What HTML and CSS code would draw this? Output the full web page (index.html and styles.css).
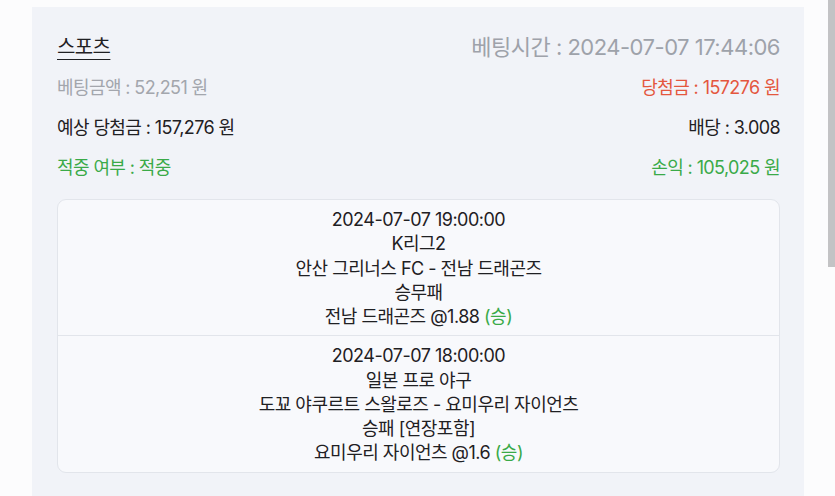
FILE: index.html
```html
<!DOCTYPE html>
<html lang="ko">
<head>
<meta charset="utf-8">
<link rel="stylesheet" href="styles.css">
</head>
<body>
<div class="page">
  <div class="card">
    <div class="header">
      <span class="title">스포츠</span>
      <span class="time">베팅시간 : 2024-07-07 17:44:06</span>
    </div>
    <div class="rows">
      <div class="row">
        <span class="muted">베팅금액 : 52,251 원</span>
        <span class="red">당첨금 : 157276 원</span>
      </div>
      <div class="row">
        <span class="dark">예상 당첨금 : 157,276 원</span>
        <span class="dark">배당 : 3.008</span>
      </div>
      <div class="row">
        <span class="green">적중 여부 : 적중</span>
        <span class="green">손익 : 105,025 원</span>
      </div>
    </div>
    <div class="games">
      <div class="game">
        <div>2024-07-07 19:00:00</div>
        <div>K리그2</div>
        <div>안산 그리너스 FC - 전남 드래곤즈</div>
        <div>승무패</div>
        <div>전남 드래곤즈 @1.88 <span class="green">(승)</span></div>
      </div>
      <div class="game">
        <div>2024-07-07 18:00:00</div>
        <div>일본 프로 야구</div>
        <div>도꾜 야쿠르트 스왈로즈 - 요미우리 자이언츠</div>
        <div>승패 [연장포함]</div>
        <div>요미우리 자이언츠 @1.6 <span class="green">(승)</span></div>
      </div>
    </div>
  </div>
  <div class="scrollbar"><div class="thumb"></div></div>
</div>
</body>
</html>
```

FILE: styles.css
```css
html, body {
  margin: 0;
  padding: 0;
}
body {
  background: #fcfcfd;
  font-family: Inter, "Noto Sans CJK KR", sans-serif;
  color: #1f2023;
  overflow: hidden;
}
.page {
  position: relative;
  height: 496px;
  overflow: hidden;
  padding-top: 7px;
  box-sizing: border-box;
}
.card {
  margin: 0 0 0 32px;
  width: 772px;
  box-sizing: border-box;
  background: #f1f3f8;
  padding: 24px 24px 40px 25px;
  min-height: 520px;
}
.header {
  display: flex;
  justify-content: space-between;
  align-items: center;
  height: 28px;
}
.title {
  font-size: 20px;
  letter-spacing: -0.6px;
  text-decoration: underline;
  text-underline-offset: 5px;
  text-decoration-thickness: 1px;
  color: #1f2023;
}
.time {
  font-size: 22px;
  letter-spacing: -0.5px;
  color: #9ea2aa;
}
.rows {
  display: flex;
  flex-direction: column;
  gap: 16px;
  margin-top: 17px;
}
.row {
  display: flex;
  justify-content: space-between;
  height: 24px;
  line-height: 24px;
  font-size: 18px;
  letter-spacing: -0.6px;
}
.muted { color: #a3a6ad; }
.red { color: #e4573e; }
.dark { color: #1f2023; }
.green { color: #3aaa48; }
.games {
  margin-top: 19px;
  background: #f8f9fc;
  border: 1px solid #e2e5eb;
  border-radius: 9px;
}
.game {
  padding: 8px 0 6px;
  text-align: center;
  font-size: 18px;
  line-height: 24.25px;
  letter-spacing: -0.5px;
  color: #1f2023;
}
.game + .game {
  border-top: 1px solid #e2e5eb;
}
.scrollbar {
  position: absolute;
  top: 0;
  right: 0;
  width: 7px;
  height: 496px;
  background: #fcfcfd;
}
.thumb {
  height: 267px;
  background: #c3c3c5;
}
```
